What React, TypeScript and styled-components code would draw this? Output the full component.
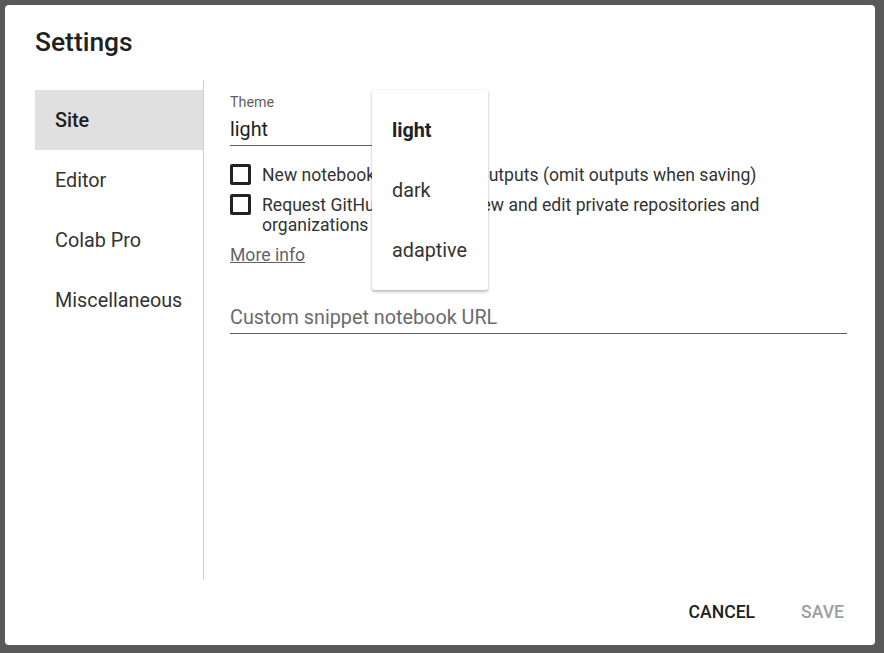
import React, { useState } from 'react';
import styled, { createGlobalStyle } from 'styled-components';

const GlobalStyle = createGlobalStyle`
  html, body {
    margin: 0;
    padding: 0;
    background: #595959;
    font-family: Roboto, "Noto Sans", Arial, sans-serif;
    color: #212121;
  }
`;

const Backdrop = styled.div`
  width: 884px;
  height: 653px;
  padding: 5px;
  box-sizing: border-box;
`;

const Dialog = styled.div`
  width: 870px;
  height: 640px;
  background: #fff;
  border-radius: 4px;
  box-sizing: border-box;
  padding: 21px 15px 15px 30px;
  display: flex;
  flex-direction: column;
`;

const Title = styled.h2`
  margin: 0 0 22px;
  font-size: 26.4px;
  line-height: 32px;
  font-weight: 500;
  color: #212121;
`;

const Body = styled.div`
  display: flex;
  height: 500px;
`;

const Sidebar = styled.nav`
  width: 168px;
  padding-top: 10px;
  border-right: 1px solid #cfcfcf;
  display: flex;
  flex-direction: column;
`;

const NavItem = styled.div<{ $active?: boolean }>`
  height: 60px;
  display: flex;
  align-items: center;
  padding-left: 20px;
  font-size: 19.8px;
  font-weight: ${({ $active }) => ($active ? 500 : 400)};
  color: ${({ $active }) => ($active ? '#212121' : '#333')};
  background: ${({ $active }) => ($active ? '#e0e0e0' : 'transparent')};
`;

const Content = styled.div`
  position: relative;
  width: 617px;
  padding: 14px 0 0 26px;
  display: flex;
  flex-direction: column;
`;

const FieldLabel = styled.div`
  font-size: 14.3px;
  line-height: 17px;
  color: #616161;
  margin-bottom: 6px;
`;

const SelectValue = styled.div`
  width: 250px;
  font-size: 19.8px;
  line-height: 26px;
  padding-bottom: 2px;
  border-bottom: 1px solid #5f5f5f;
  color: #212121;
`;

const Options = styled.div`
  margin-top: 19px;
  display: flex;
  flex-direction: column;
  gap: 10px;
`;

const CheckRow = styled.label`
  display: flex;
  align-items: flex-start;
  gap: 11px;
  font-size: 17.6px;
  line-height: 20px;
  color: #333;
`;

const Box = styled.span`
  flex: none;
  width: 15px;
  height: 15px;
  margin-top: -1px;
  border: 3px solid #222;
  border-radius: 2px;
`;

const MoreInfo = styled.a`
  font-size: 17.6px;
  line-height: 20px;
  color: #5f6368;
  text-decoration: underline;
  align-self: flex-start;
`;

const UrlInput = styled.div`
  margin-top: 40px;
  font-size: 19.8px;
  line-height: 26px;
  padding-bottom: 2px;
  border-bottom: 1px solid #5f5f5f;
  color: #6b6b6b;
`;

const Menu = styled.div`
  position: absolute;
  left: 168px;
  top: 10px;
  width: 116px;
  padding: 10px 0;
  background: #fff;
  border-radius: 2px;
  box-shadow: 0 0 1px rgba(0, 0, 0, 0.25), 0 2px 3px rgba(0, 0, 0, 0.25);
`;

const MenuItem = styled.div<{ $selected?: boolean }>`
  height: 60px;
  display: flex;
  align-items: center;
  padding-left: 20px;
  font-size: 19.8px;
  font-weight: ${({ $selected }) => ($selected ? 700 : 400)};
  color: ${({ $selected }) => ($selected ? '#212121' : '#333')};
`;

const Footer = styled.div`
  display: flex;
  justify-content: flex-end;
  gap: 14px;
  padding-top: 14px;
`;

const Button = styled.button<{ $disabled?: boolean }>`
  height: 36px;
  padding: 0 16px;
  border: none;
  background: none;
  font-family: inherit;
  font-size: 17.6px;
  font-weight: 500;
  text-transform: uppercase;
  color: ${({ $disabled }) => ($disabled ? '#9aa0a6' : '#212121')};
`;

const sections = ['Site', 'Editor', 'Colab Pro', 'Miscellaneous'];
const themes = ['light', 'dark', 'adaptive'];

const App = () => {
  const [section] = useState('Site');
  const [theme] = useState('light');

  return (
    <>
      <GlobalStyle />
      <Backdrop>
        <Dialog>
          <Title>Settings</Title>
          <Body>
            <Sidebar>
              {sections.map((s) => (
                <NavItem key={s} $active={s === section}>
                  {s}
                </NavItem>
              ))}
            </Sidebar>
            <Content>
              <FieldLabel>Theme</FieldLabel>
              <SelectValue>{theme}</SelectValue>
              <Options>
                <CheckRow>
                  <Box />
                  New notebooks use private outputs (omit outputs when saving)
                </CheckRow>
                <CheckRow>
                  <Box />
                  Request GitHub access to view and edit private repositories and organizations
                </CheckRow>
                <MoreInfo>More info</MoreInfo>
              </Options>
              <UrlInput>Custom snippet notebook URL</UrlInput>
              <Menu>
                {themes.map((t) => (
                  <MenuItem key={t} $selected={t === theme}>
                    {t}
                  </MenuItem>
                ))}
              </Menu>
            </Content>
          </Body>
          <Footer>
            <Button>Cancel</Button>
            <Button $disabled>Save</Button>
          </Footer>
        </Dialog>
      </Backdrop>
    </>
  );
};

export default App;
